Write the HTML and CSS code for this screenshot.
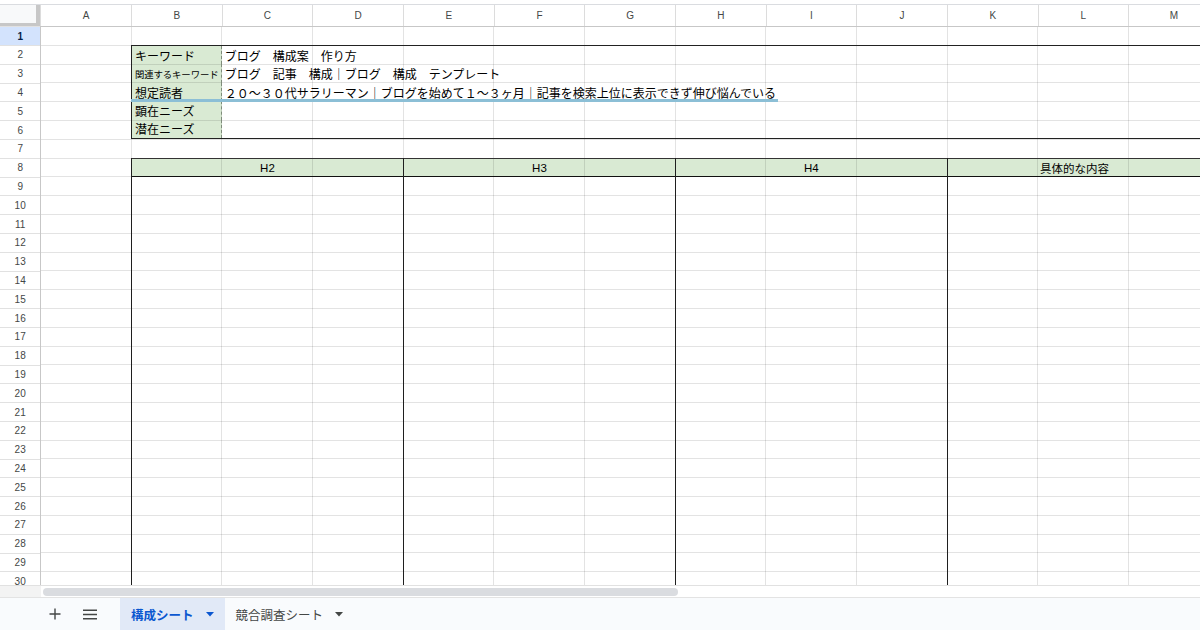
FILE: index.html
```html
<!DOCTYPE html>
<html lang="ja">
<head>
<meta charset="utf-8">
<title>構成シート</title>
<link rel="stylesheet" href="styles.css">
</head>
<body>
<div class="topstrip"></div>
<div class="viewport">
  <div class="grid">
    <div class="bg-labels"></div>
    <div class="bg-band"></div>
    <div class="gridlines"></div>

    <div class="corner"></div>
    <div class="colheads">
      <div class="ch">A</div><div class="ch">B</div><div class="ch">C</div><div class="ch">D</div>
      <div class="ch">E</div><div class="ch">F</div><div class="ch">G</div><div class="ch">H</div>
      <div class="ch">I</div><div class="ch">J</div><div class="ch">K</div><div class="ch">L</div>
      <div class="ch">M</div>
    </div>
    <div class="rowheads">
      <div class="rh sel">1</div><div class="rh">2</div><div class="rh">3</div><div class="rh">4</div>
      <div class="rh">5</div><div class="rh">6</div><div class="rh">7</div><div class="rh">8</div>
      <div class="rh">9</div><div class="rh">10</div><div class="rh">11</div><div class="rh">12</div>
      <div class="rh">13</div><div class="rh">14</div><div class="rh">15</div><div class="rh">16</div>
      <div class="rh">17</div><div class="rh">18</div><div class="rh">19</div><div class="rh">20</div>
      <div class="rh">21</div><div class="rh">22</div><div class="rh">23</div><div class="rh">24</div>
      <div class="rh">25</div><div class="rh">26</div><div class="rh">27</div><div class="rh">28</div>
      <div class="rh">29</div><div class="rh">30</div>
    </div>

    <div class="info">
      <div class="lbl">キーワード</div><div class="val">ブログ　構成案　作り方</div>
      <div class="lbl small">関連するキーワード</div><div class="val">ブログ　記事　構成｜ブログ　構成　テンプレート</div>
      <div class="lbl">想定読者</div><div class="val">２０～３０代サラリーマン｜ブログを始めて１～３ヶ月｜記事を検索上位に表示できず伸び悩んでいる</div>
      <div class="lbl">顕在ニーズ</div><div class="val"></div>
      <div class="lbl">潜在ニーズ</div><div class="val"></div>
    </div>
    <div class="underline"></div>

    <div class="grp g1"><div class="grp-head">H2</div></div>
    <div class="grp g2"><div class="grp-head">H3</div></div>
    <div class="grp g3"><div class="grp-head">H4</div></div>
    <div class="grp g4"><div class="grp-head shift">具体的な内容</div></div>
  </div>
</div>
<div class="hscroll">
  <div class="hs-corner"></div>
  <div class="hs-track"><div class="hs-thumb"></div></div>
</div>
<div class="tabs">
  <div class="tbtn">
    <svg width="12" height="12" viewBox="0 0 12 12"><path d="M6 0.5V11.5M0.5 6H11.5" stroke="#444746" stroke-width="1.4" fill="none"/></svg>
  </div>
  <div class="tbtn">
    <svg width="14" height="11" viewBox="0 0 14 11"><path d="M0 1.2H14M0 5.5H14M0 9.8H14" stroke="#444746" stroke-width="1.4" fill="none"/></svg>
  </div>
  <div class="tab active">
    <span>構成シート</span>
    <svg class="caret" width="8" height="5" viewBox="0 0 8 5"><path d="M0 0H8L4 4.5Z" fill="#0b57d0"/></svg>
  </div>
  <div class="tab">
    <span>競合調査シート</span>
    <svg class="caret" width="8" height="5" viewBox="0 0 8 5"><path d="M0 0H8L4 4.5Z" fill="#444746"/></svg>
  </div>
</div>
</body>
</html>
```

FILE: styles.css
```css
* { box-sizing: border-box; }

body {
  margin: 0;
  width: 1200px;
  height: 630px;
  overflow: hidden;
  background: #fff;
  font-family: "Liberation Sans", "Noto Sans CJK JP", sans-serif;
  color: #000;
}

.topstrip {
  height: 5px;
  border-bottom: 1px solid #dadce0;
}

.viewport {
  height: 580px;
  overflow: hidden;
}

.grid {
  display: grid;
  grid-template-columns: 40.33px repeat(13, 90.67px);
  grid-template-rows: 21.3px repeat(30, 18.8px);
}

.bg-labels {
  grid-area: 3 / 3 / 8 / 4;
  background: #d9ead3;
}

.bg-band {
  grid-area: 9 / 3 / 10 / 15;
  background: #d9ead3;
}

.gridlines {
  grid-area: 2 / 2 / 32 / 15;
  background-image:
    repeating-linear-gradient(to right, rgba(0,0,0,0.11) 0 1px, transparent 1px 90.67px),
    repeating-linear-gradient(to bottom, rgba(0,0,0,0.11) 0 1px, transparent 1px 18.8px);
}

.corner {
  grid-area: 1 / 1 / 2 / 2;
  height: calc(100% + 1px);
  background: #f8f9fa;
  border-right: 4px solid #c7c7c7;
  border-bottom: 4px solid #c7c7c7;
}

.colheads {
  grid-area: 1 / 2 / 2 / 15;
  height: calc(100% + 1px);
  display: grid;
  grid-template-columns: repeat(13, 90.67px);
  border-bottom: 1px solid #c7c7c7;
}

.ch {
  display: flex;
  align-items: center;
  justify-content: center;
  font-size: 10px;
  color: #444746;
  border-left: 1px solid #dcdcdc;
}

.rowheads {
  grid-area: 2 / 1 / 32 / 2;
  width: calc(100% + 1px);
  display: grid;
  grid-template-rows: repeat(30, 18.8px);
  border-right: 1px solid #c7c7c7;
}

.rh {
  display: flex;
  align-items: center;
  justify-content: center;
  font-size: 10px;
  color: #444746;
  border-top: 1px solid #e1e1e1;
}

.rh.sel {
  background: #d3e3fd;
  color: #041e49;
  font-weight: 700;
}

.info {
  grid-area: 3 / 3 / 8 / 15;
  border: 1px solid #222;
  border-right: none;
  display: grid;
  grid-template-columns: 89.67px 1fr;
  grid-template-rows: repeat(5, 1fr);
}

.lbl {
  display: flex;
  align-items: center;
  padding-left: 3px;
  font-size: 12px;
  white-space: nowrap;
  border-right: 1px dashed #7f8c7b;
}

.lbl.small {
  font-size: 9.4px;
  letter-spacing: -0.1px;
}

.val {
  display: flex;
  align-items: center;
  padding-left: 3px;
  font-size: 12px;
  white-space: nowrap;
}

.underline {
  grid-area: 5 / 3 / 6 / 11;
  align-self: end;
  width: 647px;
  height: 3px;
  margin-bottom: -0.5px;
  background: #8cbfd6;
}

.grp {
  grid-row: 9 / 32;
  border-left: 1px solid #1f1f1f;
  display: flex;
  flex-direction: column;
}

.g1 { grid-column: 3 / 6; }
.g2 { grid-column: 6 / 9; }
.g3 { grid-column: 9 / 12; }
.g4 { grid-column: 12 / 15; }

.grp-head {
  height: 19.3px;
  border-top: 1px solid #333;
  border-bottom: 1.3px solid #111;
  display: flex;
  align-items: center;
  justify-content: center;
  font-size: 11.5px;
}

.grp-head.shift {
  justify-content: flex-start;
  padding-left: 92px;
}

.hscroll {
  height: 12px;
  display: flex;
  border-top: 1px solid #e1e1e1;
}

.hs-corner {
  width: 41px;
  background: #f3f3f3;
}

.hs-track {
  flex: 1;
  padding: 2px 0 0 2px;
}

.hs-thumb {
  width: 635px;
  height: 8px;
  border-radius: 4px;
  background: #dadce0;
}

.tabs {
  height: 33px;
  background: #f9fbfd;
  border-top: 1px solid #e3e3e3;
  display: flex;
  align-items: stretch;
  padding-left: 45px;
}

.tbtn {
  width: 20px;
  display: flex;
  align-items: center;
  justify-content: center;
  margin-right: 15px;
}

.tab {
  display: flex;
  align-items: center;
  gap: 12px;
  padding: 0 11px 0 11px;
  font-family: "Noto Sans CJK JP", "Liberation Sans", sans-serif;
  font-size: 12.5px;
  color: #444746;
}

.tab.active {
  margin-left: 5px;
  background: #e1e9f7;
  color: #0b57d0;
  font-weight: 700;
}

.caret { flex: none; }
```
